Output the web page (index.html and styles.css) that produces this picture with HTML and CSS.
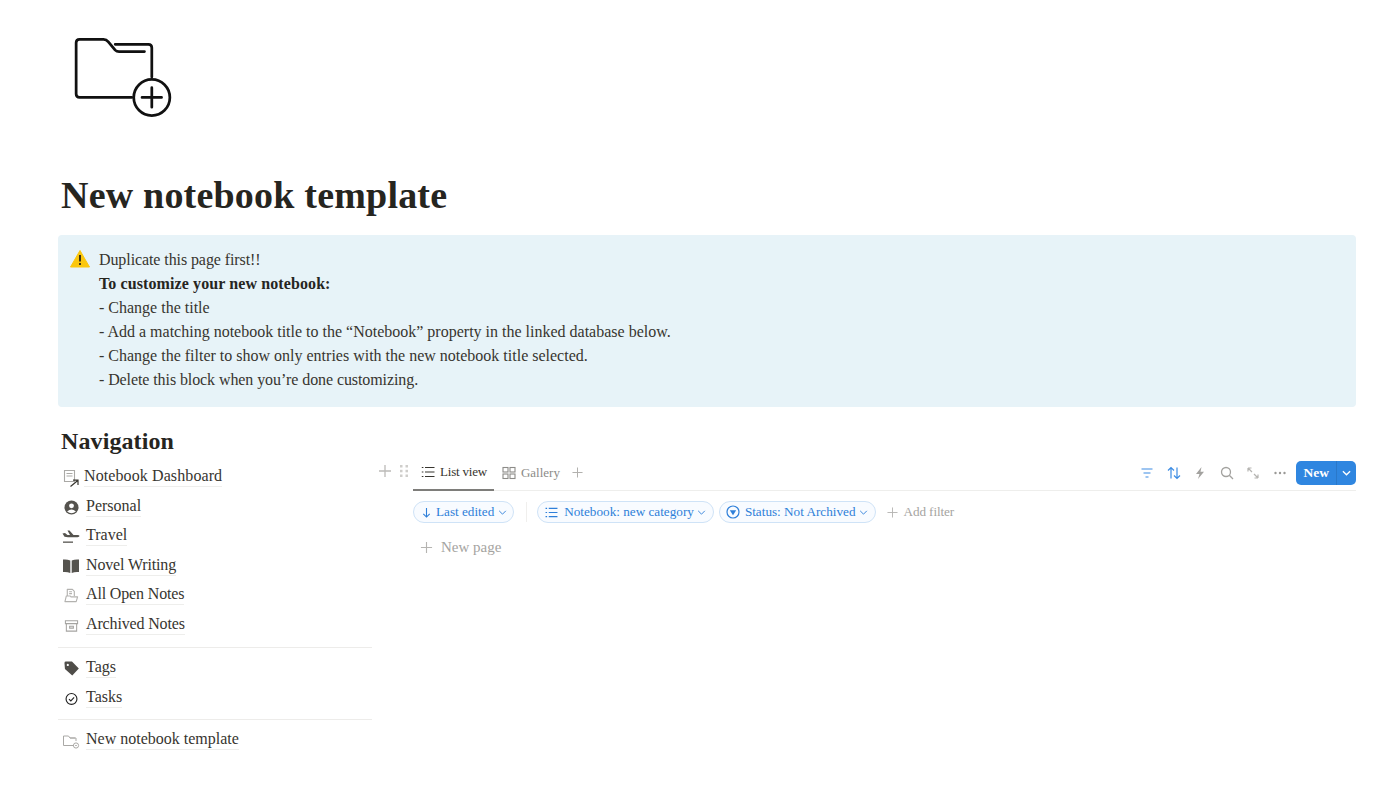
FILE: index.html
```html
<!DOCTYPE html>
<html lang="en">
<head>
<meta charset="utf-8">
<title>New notebook template</title>
<link rel="stylesheet" href="styles.css">
</head>
<body>
<main class="page">
  <svg class="page-icon" viewBox="0 0 100 84" fill="none" stroke="#111" stroke-width="2.800" stroke-linecap="round" stroke-linejoin="round">
    <path d="M59 64H5.500Q2 64 2 60.500V8Q2 4.500 5.500 4.500H30Q33 4.500 35 7L42 15.500Q43.500 17 46 17H72"/>
    <path d="M42 9.500H76Q79.500 9.500 79.500 13V43"/>
    <circle cx="79.500" cy="64" r="18.500"/>
    <path d="M79.500 54V74M69.500 64H89.500"/>
  </svg>
  <h1 class="title">New notebook template</h1>
  <section class="callout">
    <svg class="warn" viewBox="0 0 20 18"><path d="M10 0.500L19.500 17H0.500Z" fill="#fbc70e" stroke="#fbc70e" stroke-linejoin="round"/><path d="M10 5V11.500M10 13V15" stroke="#2a2416" stroke-width="1.800"/></svg>
    <div class="callout-text">
      <p class="tight">Duplicate this page first!!</p>
      <p class="loose"><strong>To customize your new notebook:</strong></p>
      <p>- Change the title</p>
      <p>- Add a matching notebook title to the “Notebook” property in the linked database below.</p>
      <p>- Change the filter to show only entries with the new notebook title selected.</p>
      <p class="tight">- Delete this block when you’re done customizing.</p>
    </div>
  </section>
  <div class="columns">
    <nav class="nav">
      <h2 class="nav-title">Navigation</h2>
      <ul class="nav-list">
        <li class="nav-item first"><svg class="ni small" viewBox="0 0 17 19" fill="none" stroke="#aaa9a6" stroke-width="1.100"><path d="M1.500 1.500H11.500V12.500H1.500Z"/><path d="M3.500 4.500H9.500M3.500 7H9.500"/><path d="M7.500 17.500L14.800 11.500M10 11.200H15V16" stroke="#37352f" stroke-width="1.200"/></svg><span class="link wide-text">Notebook Dashboard</span></li>
        <li class="nav-item"><svg class="ni" viewBox="0 0 16 16"><circle cx="8" cy="8" r="7.500" fill="#55534e"/><circle cx="8" cy="6.200" r="2.600" fill="#fff"/><path d="M3.300 12.200Q8 8.200 12.700 12.200Q8 15.800 3.300 12.200Z" fill="#fff"/></svg><span class="link">Personal</span></li>
        <li class="nav-item"><svg class="ni wide" viewBox="0 0 18 16" fill="#55534e"><path d="M0.500 4.500L3 4L5.500 6H8L5.500 1.500H7.500L11.500 6H15.500Q17.500 6 17.500 7T15.500 8.200H6L2.500 7.800Z"/><path d="M1 12.500H11V13.800H1Z"/></svg><span class="link">Travel</span></li>
        <li class="nav-item"><svg class="ni wide" viewBox="0 0 18 16" fill="#55534e"><path d="M1 1.500Q5 1 8.300 2.500V15Q5 13.500 1 14Z"/><path d="M17 1.500Q13 1 9.700 2.500V15Q13 13.500 17 14Z"/></svg><span class="link narrow-text">Novel Writing</span></li>
        <li class="nav-item"><svg class="ni" viewBox="0 0 16 16" fill="none" stroke="#b3b2af" stroke-width="1.200" stroke-linejoin="round"><path d="M3.500 8V1.500H9L11 3.500V8.500M1 14.500L2.500 8.500H6.500L7.500 9.500H14.500L13 14.500Z"/><path d="M5.500 4H8.500M5.500 6H8.500"/></svg><span class="link narrow-text">All Open Notes</span></li>
        <li class="nav-item"><svg class="ni" viewBox="0 0 16 16" fill="none" stroke="#a5a4a1" stroke-width="1.100"><path d="M1.500 3H14.500V6H1.500ZM2.500 6V14H13.500V6M6 8.800H10V10.800H6Z"/></svg><span class="link narrow-text">Archived Notes</span></li>
      </ul>
      <hr class="rule">
      <ul class="nav-list">
        <li class="nav-item"><svg class="ni" viewBox="0 0 16 16"><path d="M.5 2Q.5 .5 2 .5H8.500L15.800 8L8.800 15.500L1 8.500ZM4 3A1.200 1.200 0 1 0 4.100 3Z" fill="#4f4d49" fill-rule="evenodd"/></svg><span class="link">Tags</span></li>
        <li class="nav-item"><svg class="ni" viewBox="0 0 16 16" fill="none" stroke="#222" stroke-width="1.200"><circle cx="8" cy="8.500" r="5.800"/><path d="M5.300 8.700L7.300 10.600L10.800 6.800"/></svg><span class="link">Tasks</span></li>
      </ul>
      <hr class="rule rule-b">
      <ul class="nav-list">
        <li class="nav-item"><svg class="ni wide" viewBox="0 0 18 16" fill="none" stroke="#aaa9a6" stroke-width="1"><path d="M12 12.500H1.500V3H6.500L8 5H14V8M8 5H13"/><circle cx="14" cy="12.500" r="2.600"/><path d="M13.200 12.500H14.800"/></svg><span class="link">New notebook template</span></li>
      </ul>
    </nav>
    <section class="db">
      <div class="db-gutter">
        <svg class="gi" viewBox="0 0 14 14" fill="none" stroke="#bcbbb8" stroke-width="1.300"><path d="M7 1V13M1 7H13"/></svg>
        <svg class="gi" viewBox="0 0 14 14" fill="#cfcecb"><rect x="3" y="1" width="2.500" height="2.500"/><rect x="8.500" y="1" width="2.500" height="2.500"/><rect x="3" y="5.800" width="2.500" height="2.500"/><rect x="8.500" y="5.800" width="2.500" height="2.500"/><rect x="3" y="10.500" width="2.500" height="2.500"/><rect x="8.500" y="10.500" width="2.500" height="2.500"/></svg>
      </div>
      <div class="db-main">
        <div class="tabs">
          <div class="tab active">
            <svg class="ti" viewBox="0 0 14 14" fill="none" stroke="#37352f" stroke-width="1.200"><path d="M4 2.500H13.500M4 7H13.500M4 11.500H13.500M0.800 2.500H2.400M0.800 7H2.400M0.800 11.500H2.400"/></svg>
            <span class="tab-label">List view</span>
          </div>
          <div class="tab muted">
            <svg class="ti" viewBox="0 0 14 14" fill="none" stroke="#8c8b88" stroke-width="1.100"><rect x="1" y="1.500" width="5" height="4.500"/><rect x="8" y="1.500" width="5" height="4.500"/><rect x="1" y="8" width="5" height="4.500"/><rect x="8" y="8" width="5" height="4.500"/></svg>
            <span>Gallery</span>
          </div>
          <svg class="tab-add" viewBox="0 0 12 12" fill="none" stroke="#b2b1ae" stroke-width="1.100"><path d="M6 .5V11.500M.5 6H11.500"/></svg>
          <div class="tools">
            <svg class="tool" viewBox="0 0 14 14" fill="none" stroke="#3c8ce3" stroke-width="1.200"><path d="M1.500 3H12.500M3.500 7H10.500M5.500 11H8.500"/></svg>
            <svg class="tool" viewBox="0 0 14 14" fill="none" stroke="#3c8ce3" stroke-width="1.200"><path d="M4 12.500V1.500M1 4.500L4 1.500L7 4.500M10 1.500V12.500M7 9.500L10 12.500L13 9.500"/></svg>
            <svg class="tool" viewBox="0 0 14 14" fill="#a3a29f"><path d="M8.500 1L3 8H6.500L5 13L11 5.800H7.500Z"/></svg>
            <svg class="tool" viewBox="0 0 14 14" fill="none" stroke="#a3a29f" stroke-width="1.300"><circle cx="6" cy="6" r="4.500"/><path d="M9.300 9.300L13 13"/></svg>
            <svg class="tool" viewBox="0 0 14 14" fill="none" stroke="#b5b4b1" stroke-width="1.200"><path d="M2 2L6 6M2 2V5.500M2 2H5.500M12 12L8 8M12 12V8.500M12 12H8.500"/></svg>
            <svg class="tool" viewBox="0 0 14 14" fill="#9a9996"><circle cx="2.500" cy="7" r="1.200"/><circle cx="7" cy="7" r="1.200"/><circle cx="11.500" cy="7" r="1.200"/></svg>
            <div class="new-btn"><span class="new-label">New</span><span class="new-caret"><svg class="caret-w" viewBox="0 0 10 6" fill="none" stroke="#fff" stroke-width="1.500"><path d="M1 1L5 5L9 1"/></svg></span></div>
          </div>
        </div>
        <div class="filters">
          <div class="chip chip-a">
            <svg class="ci" viewBox="0 0 12 12" fill="none" stroke="#2e7fd9" stroke-width="1.200"><path d="M6 1V11M2.500 7.500L6 11L9.500 7.500"/></svg>
            <span>Last edited</span>
            <svg class="caret" viewBox="0 0 10 6" fill="none" stroke="#2e7fd9" stroke-width="1.100"><path d="M1 1L5 5L9 1"/></svg>
          </div>
          <span class="sep"></span>
          <div class="chip chip-b">
            <svg class="ci wide-ci" viewBox="0 0 14 12" fill="none" stroke="#2e7fd9" stroke-width="1.100"><path d="M4 1.500H13.500M4 6H13.500M4 10.500H13.500M.5 1.500H2.200M.5 6H2.200M.5 10.500H2.200"/></svg>
            <span>Notebook: new category</span>
            <svg class="caret" viewBox="0 0 10 6" fill="none" stroke="#2e7fd9" stroke-width="1.100"><path d="M1 1L5 5L9 1"/></svg>
          </div>
          <div class="chip chip-c">
            <svg class="ci status" viewBox="0 0 14 14"><circle cx="7" cy="7" r="6" fill="none" stroke="#2e7fd9" stroke-width="1.200"/><path d="M3.800 5.300H10.200L7 10.200Z" fill="#2e7fd9"/></svg>
            <span>Status: Not Archived</span>
            <svg class="caret" viewBox="0 0 10 6" fill="none" stroke="#2e7fd9" stroke-width="1.100"><path d="M1 1L5 5L9 1"/></svg>
          </div>
          <div class="add-filter">
            <svg class="ci" viewBox="0 0 12 12" fill="none" stroke="#b5b4b1" stroke-width="1"><path d="M6 .5V11.500M.5 6H11.500"/></svg>
            <span>Add filter</span>
          </div>
        </div>
        <div class="new-page">
          <svg class="np" viewBox="0 0 14 14" fill="none" stroke="#b5b4b1" stroke-width="1.200"><path d="M7 1V13M1 7H13"/></svg>
          <span>New page</span>
        </div>
      </div>
    </section>
  </div>
</main>
</body>
</html>
```
FILE: styles.css
```css
* { box-sizing: border-box; }
html, body { margin: 0; padding: 0; background: #fff; }
body {
  font-family: "Liberation Serif", "Times New Roman", serif;
  color: #37352f;
  height: 804px;
  overflow: hidden;
}
.page { padding: 35px 44px 0 58px; }
.page-icon { display: block; width: 98px; height: 82px; margin-left: 16px; }
.title {
  margin: 55px 0 0 3px;
  font-size: 38px;
  line-height: 46px;
  font-weight: 700;
  letter-spacing: .2px;
  color: #26251f;
}
.callout {
  display: flex;
  margin-top: 17px;
  height: 172px;
  padding: 13px 12px 0 12px;
  background: #e7f3f8;
  border-radius: 4px;
}
.warn { width: 20px; height: 18px; margin: 2px 9px 0 0; flex: none; }
.callout-text { font-size: 16px; line-height: 24px; color: #37352f; }
.callout-text p { margin: 0; }
.callout-text strong { color: #26251f; }
.tight { letter-spacing: -.09px; }
.loose { letter-spacing: .1px; }
.columns { display: flex; margin-top: 19px; }
.nav { width: 314px; flex: none; }
.nav-title {
  margin: 0 0 0 3px;
  font-size: 24px;
  line-height: 30px;
  font-weight: 700;
  letter-spacing: .1px;
  color: #26251f;
}
.nav-list { list-style: none; margin: 0; padding: 0; }
.nav-item {
  display: flex;
  align-items: center;
  height: 29.5px;
  padding-left: 6px;
  font-size: 16px;
}
.nav-item.first { margin-top: 6px; }
.ni { width: 15px; height: 15px; flex: none; margin-right: 7px; margin-top: 2px; }
.ni.wide { width: 18px; height: 16px; margin-left: -2px; margin-right: 6px; }
.ni.small { width: 17px; height: 19px; margin-left: -1px; margin-right: 4px; margin-top: 3px; }
.link { border-bottom: 1px solid #eeeeec; line-height: 20px; color: #37352f; }
.wide-text { letter-spacing: .1px; }
.narrow-text { letter-spacing: -.15px; }
.rule { border: 0; border-top: 1px solid #edecea; margin: 7.5px 0 5.5px; height: 0; }
.rule-b { margin-top: 6.5px; }
.db { flex: 1; display: flex; padding-top: 33px; min-width: 0; }
.db-gutter { width: 41px; flex: none; display: flex; gap: 5px; padding: 5px 0 0 6px; align-items: flex-start; }
.gi { width: 14px; height: 14px; flex: none; }
.db-main { flex: 1; min-width: 0; }
.tabs {
  display: flex;
  align-items: center;
  height: 32px;
  border-bottom: 1px solid #eeeeec;
  font-size: 13px;
}
.tab { display: flex; align-items: center; gap: 5px; height: 32px; padding: 0 7px 4px 8px; }
.tab.active { border-bottom: 2px solid #7e7d7a; color: #37352f; }
.tab.muted { color: #8c8b88; }
.tab-label { letter-spacing: -.2px; }
.ti { width: 14px; height: 14px; flex: none; }
.tab-add { width: 11px; height: 11px; margin: -5px 0 0 5px; flex: none; }
.tools { margin-left: auto; display: flex; align-items: center; gap: 12.500px; padding-bottom: 4px; }
.tool { width: 14px; height: 14px; flex: none; }
.new-btn {
  display: flex;
  align-items: center;
  height: 24px;
  margin-left: -3.500px;
  background: #2f86e0;
  border-radius: 5px;
  color: #fff;
  font-weight: 700;
  font-size: 13.500px;
}
.new-label { padding: 0 7px 0 8px; line-height: 24px; }
.new-caret { display: flex; align-items: center; justify-content: center; width: 20px; height: 24px; border-left: 1px solid #2a78c9; }
.caret-w { width: 9px; height: 6px; }
.filters { display: flex; align-items: center; height: 22px; margin-top: 10px; font-size: 13.200px; color: #2e7fd9; }
.chip {
  display: flex;
  align-items: center;
  height: 22px;
  border: 1px solid #cfe3f7;
  border-radius: 11px;
  background: #f8fbff;
}
.chip-a { gap: 4px; padding: 0 6px 0 7px; }
.chip-b { gap: 6px; padding: 0 7px 0 7px; }
.chip-b .caret { margin-left: -3px; }
.chip-c { gap: 5px; padding: 0 7px 0 6px; margin-left: 5px; }
.chip-c .caret { margin-left: -2px; }
.ci { width: 11px; height: 11px; flex: none; }
.wide-ci { width: 13px; height: 11px; }
.status { width: 14px; height: 14px; }
.caret { width: 9px; height: 5px; flex: none; }
.sep { width: 1px; height: 20px; background: #f0efed; margin: 0 10px 0 12px; }
.add-filter { display: flex; align-items: center; gap: 6px; margin-left: 11px; color: #a5a4a1; letter-spacing: -.1px; }
.new-page { display: flex; align-items: center; gap: 8px; height: 24px; margin-top: 12px; padding-left: 7px; font-size: 15px; color: #a5a4a1; }
.np { width: 13px; height: 13px; flex: none; }
```
